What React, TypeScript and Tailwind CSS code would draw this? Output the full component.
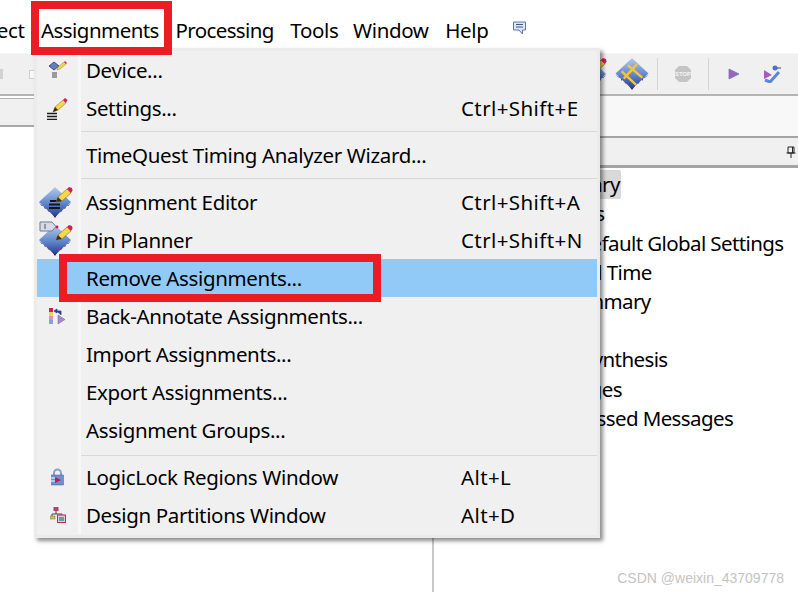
import type { ReactNode } from "react";

const font = "font-['Noto_Sans','Open_Sans',sans-serif]";

function Pencil({ x = 0, y = 0 }: { x?: number; y?: number }) {
  return (
    <g transform={`translate(${x} ${y})`}>
      <path d="M0 13 L2 8 L11 0 L15 4 L6 12 Z" fill="#f7d64a" stroke="#7a6a2a" strokeWidth="0.6" />
      <path d="M11 0 L13 -2 L16 -1 L16.5 1.5 L15 4 Z" fill="#d81b60" />
      <path d="M0 13 L2 8 L6 12 Z" fill="#3a3020" />
    </g>
  );
}

function Diamond({ id, cross }: { id: string; cross?: boolean }) {
  return (
    <g>
      <defs>
        <linearGradient id={id} x1="0" y1="0" x2="0" y2="1">
          <stop offset="0" stopColor="#b4c9ea" />
          <stop offset="0.55" stopColor="#5f86cc" />
          <stop offset="1" stopColor="#25388c" />
        </linearGradient>
      </defs>
      <path
        d="M0 17 L3 20 L4 19 L6 23 L7 22 L10 26 L11 25 L14 29 L16 32 L18 29 L21 25 L22 26 L25 22 L26 23 L28 19 L29 20 L32 17 L16 29 Z"
        fill="#1c1c30"
      />
      <path d="M16 1 L32 16 L16 31 L0 16 Z" fill={`url(#${id})`} />
      {cross && (
        <path d="M6 14 L20 27 M12 8 L26 20 M21 7 L8 21" stroke="#f5c33b" strokeWidth="2.4" fill="none" />
      )}
    </g>
  );
}

function EditorIcon() {
  return (
    <svg width="34" height="36" viewBox="0 -3 34 36" className="mr-[3px] mt-[-2px]">
      <Diamond id="chipEditor" />
      <path d="M11 15h11M10 18.500h11M10 22h11" stroke="#15151f" strokeWidth="1.800" />
      <Pencil x={17} y={3} />
    </svg>
  );
}

function PlannerIcon() {
  return (
    <svg width="34" height="36" viewBox="0 -3 34 36" className="mr-[3px] mt-[-3px]">
      <Diamond id="chipPlanner" />
      <path d="M1 -2H13L17 2.500L13 7H1Z" fill="#d5dae6" stroke="#6f7a93" />
      <path d="M6 0V5" stroke="#555" />
      <circle cx="18" cy="3" r="1.400" fill="#c2185b" />
      <Pencil x={17} y={3} />
    </svg>
  );
}

function DeviceIcon() {
  return (
    <svg width="18" height="18" viewBox="0 0 18 18">
      <path d="M5 1 L10 5 L5 9 L0 5 Z" fill="#5f80bd" stroke="#26346e" strokeWidth="0.800" />
      <path d="M8 9 L9 6 L15 1 L17 3 L11 8 Z" fill="#f7d64a" stroke="#8a7a30" strokeWidth="0.500" />
      <path d="M15 1 L16 0 L18 2 L17 3 Z" fill="#d81b60" />
      <path d="M3 12h5M3 14h5M3 16h5" stroke="#45454f" strokeWidth="1" />
    </svg>
  );
}

function SettingsIcon() {
  return (
    <svg width="21" height="23" viewBox="0 0 21 23" className="mr-[1px]">
      <path d="M6 15 L8 10 L16 3 L19 6 L11 13 Z" fill="#f7d64a" stroke="#8a7a30" strokeWidth="0.600" />
      <path d="M16 3 L18 1 L20.500 3 L19 6 Z" fill="#d81b60" />
      <path d="M6 15 L8 10 L11 13 Z" fill="#302818" />
      <path d="M0 16.500h10M0 19.500h10M0 22.500h10" stroke="#1a1a1a" strokeWidth="1.300" />
    </svg>
  );
}

function BackIcon() {
  return (
    <svg width="17" height="17" viewBox="0 0 17 17">
      <rect x="0" y="0" width="4" height="4" fill="#d81b60" />
      <rect x="0" y="4" width="4" height="4" fill="#f3d34a" />
      <rect x="0" y="8" width="4" height="4" fill="#e090c0" />
      <rect x="0" y="12" width="4" height="4" fill="#7fa3dc" />
      <path d="M7 3H12V7M5 3L8 1V5Z" stroke="#2b3f8f" fill="#2b3f8f" strokeWidth="0.800" />
      <path d="M9 7 L16 11.500 L9 16 Z" fill="#a78bc8" stroke="#7a5ea8" strokeWidth="0.500" />
    </svg>
  );
}

function LockIcon() {
  return (
    <svg width="13" height="18" viewBox="0 0 13 18">
      <path d="M3 8V5a3.500 3.500 0 0 1 7 0v3" fill="none" stroke="#8aa0c8" strokeWidth="2" />
      <rect x="0.500" y="7" width="12" height="10" fill="#6f8fd0" stroke="#3f5aa0" strokeWidth="0.500" />
      <path d="M0 10h5M0 13h5" stroke="#fff" />
      <path d="M4 9 L10 12 L4 15 Z" fill="#c2185b" />
    </svg>
  );
}

function PartitionIcon() {
  return (
    <svg width="16" height="16" viewBox="0 0 16 16">
      <rect x="3.500" y="0" width="5" height="4" fill="#b0436e" />
      <path d="M6 4V7M2 10V7H12V9" stroke="#444" fill="none" />
      <rect x="0" y="9" width="5" height="3" fill="#d6c24a" stroke="#666" strokeWidth="0.500" />
      <rect x="7.500" y="8" width="8" height="7.500" fill="#c9d6d6" stroke="#d81b60" />
      <rect x="9" y="10" width="5" height="4" fill="#6f9a96" />
    </svg>
  );
}

type Row = { label: string; shortcut?: string; icon?: ReactNode; active?: boolean } | "sep";

const rows: Row[] = [
  { label: "Device...", icon: <DeviceIcon /> },
  { label: "Settings...", shortcut: "Ctrl+Shift+E", icon: <SettingsIcon /> },
  "sep",
  { label: "TimeQuest Timing Analyzer Wizard..." },
  "sep",
  { label: "Assignment Editor", shortcut: "Ctrl+Shift+A", icon: <EditorIcon /> },
  { label: "Pin Planner", shortcut: "Ctrl+Shift+N", icon: <PlannerIcon /> },
  { label: "Remove Assignments...", active: true },
  { label: "Back-Annotate Assignments...", icon: <BackIcon /> },
  { label: "Import Assignments..." },
  { label: "Export Assignments..." },
  { label: "Assignment Groups..." },
  "sep",
  { label: "LogicLock Regions Window", shortcut: "Alt+L", icon: <LockIcon /> },
  { label: "Design Partitions Window", shortcut: "Alt+D", icon: <PartitionIcon /> },
];

const reportItems = [
  "Flow Summary",
  "Flow Settings",
  "Flow Non-Default Global Settings",
  "Flow Elapsed Time",
  "Flow OS Summary",
  "Flow Log",
  "Analysis & Synthesis",
  "Flow Messages",
  "Flow Suppressed Messages",
];

function MenuRow({ row }: { row: Exclude<Row, "sep"> }) {
  return (
    <div className={`flex h-[38px] items-center ${row.active ? "bg-[#91c9f7]" : ""}`}>
      <div
        className={`flex h-full w-[41px] shrink-0 items-center justify-center ${row.active ? "" : "bg-[#f0f0f0]"}`}
      >
        {row.icon}
      </div>
      <div className={`h-full w-[3px] shrink-0 ${row.active ? "" : "bg-[#f7f7f7]"}`} />
      <span className="ml-[5px] w-[375px] shrink-0 whitespace-nowrap pt-[1px] tracking-[-0.35px]">{row.label}</span>
      {row.shortcut && <span className="whitespace-nowrap pt-[1px] tracking-[0.4px]">{row.shortcut}</span>}
    </div>
  );
}

function Dropdown() {
  return (
    <div className="absolute left-[34px] top-[48px] w-[566px] border-[3px] border-[#ebebeb] bg-[#f0f0f0] pb-[1px] shadow-[3px_3px_4px_rgba(0,0,0,0.45)]">
      {rows.map((row, i) =>
        row === "sep" ? (
          <div key={i} className="flex h-[9px]">
            <div className="w-[41px] bg-[#f0f0f0]" />
            <div className="w-[3px] bg-[#f7f7f7]" />
            <div className={`h-[1px] flex-1 bg-[#d8d8d8] ${i === 12 ? "mt-[6px]" : "mt-[4px]"}`} />
          </div>
        ) : (
          <MenuRow key={i} row={row} />
        ),
      )}
    </div>
  );
}

function ToolbarSep() {
  return <div className="h-[32px] w-[1px] shrink-0 bg-[#d4d4d4]" />;
}

function Toolbar() {
  return (
    <div className="flex h-[43px] items-center overflow-hidden border-t border-t-[#f6f6f6] border-b-[2px] border-b-[#b4b4b4] bg-[#f0f0f0]">
      <div className="h-[10px] w-[3px] shrink-0 bg-[#d2d2d2]" />
      <div className="ml-[26px] h-[9px] w-[6px] shrink-0 border border-[#cfcfcf] bg-[#f8f8f8]" />
      <svg width="34" height="32" viewBox="0 0 34 32" className="ml-[539px] shrink-0">
        <Diamond id="chipTool" />
        <Pencil x={16} y={2} />
      </svg>
      <svg width="34" height="34" viewBox="0 0 32 33" className="ml-[7px] shrink-0">
        <Diamond id="chipCross" cross />
      </svg>
      <div className="ml-[8px]">
        <ToolbarSep />
      </div>
      <svg width="18" height="18" viewBox="0 0 18 18" className="ml-[16px] shrink-0">
        <path d="M5 1H13L17 5V13L13 17H5L1 13V5Z" fill="#c4c4c4" />
        <text x="9" y="11" fontSize="6" fontWeight="700" textAnchor="middle" fill="#f4f4f4" fontFamily="Liberation Sans">
          STOP
        </text>
      </svg>
      <div className="ml-[16px]">
        <ToolbarSep />
      </div>
      <svg width="12" height="12" viewBox="0 0 12 12" className="ml-[19px] shrink-0">
        <path d="M1 1 L11 6 L1 11 Z" fill="#a35fc0" stroke="#6a78b8" strokeWidth="0.800" />
      </svg>
      <svg width="18" height="18" viewBox="0 0 18 18" className="ml-[23px] shrink-0">
        <path d="M1 5 L9 10 L1 14 Z" fill="#a35fc0" />
        <path d="M2 15 L7 17 L16 7" fill="none" stroke="#5a86d8" strokeWidth="3" />
        <circle cx="12" cy="3" r="2.500" fill="#4a72c8" />
        <path d="M14 3h4" stroke="#2b3f8f" />
      </svg>
      <div className="ml-[17px]">
        <ToolbarSep />
      </div>
    </div>
  );
}

export default function App() {
  return (
    <div className={`relative flex h-[592px] w-[798px] flex-col overflow-hidden bg-white text-[20.500px] text-black ${font}`}>
      <nav className="flex h-[53px] shrink-0 items-center gap-[16.500px] pt-[8px] tracking-[-0.35px]">
        <span className="ml-[-40px]">Project</span>
        <span className="tracking-[-0.55px]">Assignments</span>
        <span className="tracking-[-0.6px]">Processing</span>
        <span>Tools</span>
        <span className="ml-[-2px]">Window</span>
        <span>Help</span>
        <svg width="15" height="14" viewBox="0 0 15 14" className="mt-[-5px] ml-[7px]">
          <path d="M1.500 1H13.500V9H10.500V13L7 9H1.500Z" fill="#dbe6f6" stroke="#5f78a8" />
          <path d="M4 3.500H11M4 6H11" stroke="#40588a" />
        </svg>
      </nav>

      <Toolbar />

      <div className="flex flex-1">
        <div className="h-full w-[434px] shrink-0 border-r-[2px] border-r-[#c8c8c8]">
          <div className="mt-[2px] h-[29px] border-t border-t-[#b4b4b4] border-b-[2px] border-b-[#a8a8a8] bg-[#f0f0f0]" />
        </div>
        <div className="flex flex-1 flex-col">
          <div className="h-[42px] border-b-[2px] border-b-[#a4a4a4] bg-[#f8f8f8]" />
          <div className="flex h-[30px] items-center justify-between border-b-[3px] border-b-[#a4a4a4] bg-[#f0f0f0] pr-[2px] pl-[4px]">
            <span className="tracking-[-0.6px]">Table of Contents</span>
            <svg width="10" height="12" viewBox="0 0 10 12">
              <path d="M2 1H8V7H2ZM0.500 7H9.500M5 7V12M6.500 1V7" fill="none" stroke="#222" />
            </svg>
          </div>
          <ul className="pt-[2px] pl-[51px]">
            {reportItems.map((item, i) => (
              <li key={item} className="flex h-[29.200px] items-center tracking-[-0.6px]">
                <span className={`flex h-full items-center rounded-[2px] ${i === 0 ? "ml-[-3px] bg-[#d9d9d9] pr-[1px] pl-[3px]" : ""}`}>
                  {item}
                </span>
              </li>
            ))}
          </ul>
        </div>
      </div>

      <Dropdown />

      {/* red annotation boxes drawn over the screenshot */}
      <div className="absolute left-[31px] top-[1px] h-[54px] w-[141px] border-[8px] border-[#ec1c24]" />
      <div className="absolute left-[59px] top-[254px] h-[48px] w-[322px] border-[8px] border-[#ec1c24]" />

      <span className="absolute right-[14px] bottom-[3px] font-['Liberation_Sans',sans-serif] text-[14px] text-[#c4c4c4]">
        CSDN @weixin_43709778
      </span>
    </div>
  );
}
